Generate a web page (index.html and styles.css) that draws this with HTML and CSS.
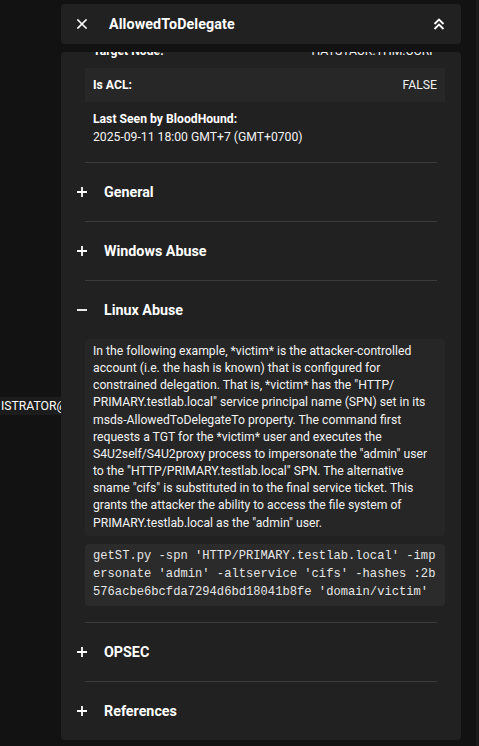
FILE: index.html
```html
<!DOCTYPE html>
<html>
<head>
<meta charset="utf-8">
<link rel="stylesheet" href="styles.css">
</head>
<body>
<div class="canvas">
  <div class="node-label">ISTRATOR@HAYSTACK.THM.CORP</div>
</div>
<div class="panel">
  <div class="header">
    <svg class="icon-close" width="10" height="10" viewBox="0 0 10 10"><path d="M1 1L9 9M9 1L1 9" stroke="#fff" stroke-width="1.6" stroke-linecap="square"/></svg>
    <div class="title">AllowedToDelegate</div>
    <svg class="icon-collapse" width="12" height="12" viewBox="0 0 12 12"><path d="M1.5 6L6 1.5L10.5 6M1.5 11L6 6.5L10.5 11" fill="none" stroke="#fff" stroke-width="1.8"/></svg>
  </div>
  <div class="body">
    <div class="scroll">
      <div class="props">
        <div class="prop"><span class="label">Target Node:</span><span class="value">HAYSTACK.THM.CORP</span></div>
        <div class="prop shade"><span class="label">Is ACL:</span><span class="value">FALSE</span></div>
        <div class="prop stacked"><span class="label">Last Seen by BloodHound:</span><span class="value">2025-09-11 18:00 GMT+7 (GMT+0700)</span></div>
      </div>
      <div class="divider"></div>
      <div class="section">
        <svg class="sec-icon" width="10" height="10" viewBox="0 0 10 10"><path d="M5 0V10M0 5H10" stroke="#fff" stroke-width="1.8"/></svg>
        <span class="sec-title">General</span>
      </div>
      <div class="divider"></div>
      <div class="section">
        <svg class="sec-icon" width="10" height="10" viewBox="0 0 10 10"><path d="M5 0V10M0 5H10" stroke="#fff" stroke-width="1.8"/></svg>
        <span class="sec-title">Windows Abuse</span>
      </div>
      <div class="divider"></div>
      <div class="section">
        <svg class="sec-icon" width="10" height="10" viewBox="0 0 10 10"><path d="M0 5H10" stroke="#fff" stroke-width="1.8"/></svg>
        <span class="sec-title">Linux Abuse</span>
      </div>
      <div class="text-panel">In the following example, *victim* is the attacker-controlled account (i.e. the hash is known) that is configured for constrained delegation. That is, *victim* has the "HTTP/ PRIMARY.testlab.local" service principal name (SPN) set in its msds-AllowedToDelegateTo property. The command first requests a TGT for the *victim* user and executes the S4U2self/S4U2proxy process to impersonate the "admin" user to the "HTTP/PRIMARY.testlab.local" SPN. The alternative sname "cifs" is substituted in to the final service ticket. This grants the attacker the ability to access the file system of PRIMARY.testlab.local as the "admin" user.</div>
      <div class="code">getST.py -spn 'HTTP/PRIMARY.testlab.local' -impersonate 'admin' -altservice 'cifs' -hashes :2b576acbe6bcfda7294d6bd18041b8fe 'domain/victim'</div>
      <div class="divider gap"></div>
      <div class="section">
        <svg class="sec-icon" width="10" height="10" viewBox="0 0 10 10"><path d="M5 0V10M0 5H10" stroke="#fff" stroke-width="1.8"/></svg>
        <span class="sec-title">OPSEC</span>
      </div>
      <div class="divider"></div>
      <div class="section">
        <svg class="sec-icon" width="10" height="10" viewBox="0 0 10 10"><path d="M5 0V10M0 5H10" stroke="#fff" stroke-width="1.8"/></svg>
        <span class="sec-title">References</span>
      </div>
    </div>
  </div>
</div>
<div class="scrollbar"></div>
</body>
</html>
```
FILE: styles.css
```css
html, body {
  margin: 0;
  padding: 0;
  background: #121212;
  width: 479px;
  height: 746px;
  overflow: hidden;
  font-family: Roboto, "Liberation Sans", sans-serif;
  color: #fff;
}
.canvas {
  position: absolute;
  left: 0;
  top: 0;
  width: 479px;
  height: 746px;
}
.node-label {
  position: absolute;
  left: 0;
  top: 397px;
  height: 18px;
  line-height: 18px;
  padding: 0 1px;
  background: #1c1c1c;
  font-size: 12.2px;
  white-space: nowrap;
  color: #fff;
}
.scrollbar {
  position: absolute;
  right: 0;
  top: 0;
  width: 3px;
  height: 746px;
  background: #1b1b1b;
}
.panel {
  position: relative;
  margin: 4px 0 0 61px;
  width: 400px;
  display: flex;
  flex-direction: column;
  gap: 8px;
}
.header {
  height: 40px;
  background: #212121;
  border-radius: 4px;
  display: flex;
  align-items: center;
  padding: 0 16px;
}
.icon-close { flex: none; }
.title {
  flex: 1;
  margin-left: 22px;
  font-size: 14.3px;
  font-weight: 700;
  letter-spacing: 0.1px;
}
.icon-collapse { flex: none; margin-top: -1px; }
.body {
  height: 688px;
  background: #212121;
  border-radius: 4px;
  overflow: hidden;
}
.scroll {
  margin-top: -18px;
  padding: 0 16px 0 24px;
}
.props { display: flex; flex-direction: column; }
.prop {
  height: 34px;
  display: flex;
  align-items: center;
  justify-content: space-between;
  padding: 0 8px;
  font-size: 12.2px;
}
.prop.shade { background: #272727; }
.label { font-weight: 700; }
.value { color: #f2f2f2; }
.prop.stacked {
  height: auto;
  flex-direction: column;
  align-items: flex-start;
  padding: 8px 8px 8px 8px;
  line-height: 18px;
}
.divider {
  height: 1px;
  background: #3b3b3b;
  margin: 8px 8px 0 0;
}
.divider.gap { margin-top: 16px; }
.section {
  height: 58px;
  display: flex;
  align-items: center;
  margin-left: -8px;
}
.sec-icon { flex: none; margin-right: 17px; }
.sec-title {
  font-size: 14.3px;
  font-weight: 700;
}
.section + .divider { margin-top: 0; }
.text-panel {
  background: #262626;
  border-radius: 4px;
  padding: 4px 8px;
  font-size: 12.2px;
  line-height: 17.16px;
  color: #f2f2f2;
}
.code {
  margin-top: 8px;
  background: #2b2b2b;
  border-radius: 4px;
  padding: 3px 8px 5px;
  font-family: "Liberation Mono", monospace;
  font-size: 12.15px;
  line-height: 18px;
  color: #e6e6e6;
  word-break: break-all;
}
```
